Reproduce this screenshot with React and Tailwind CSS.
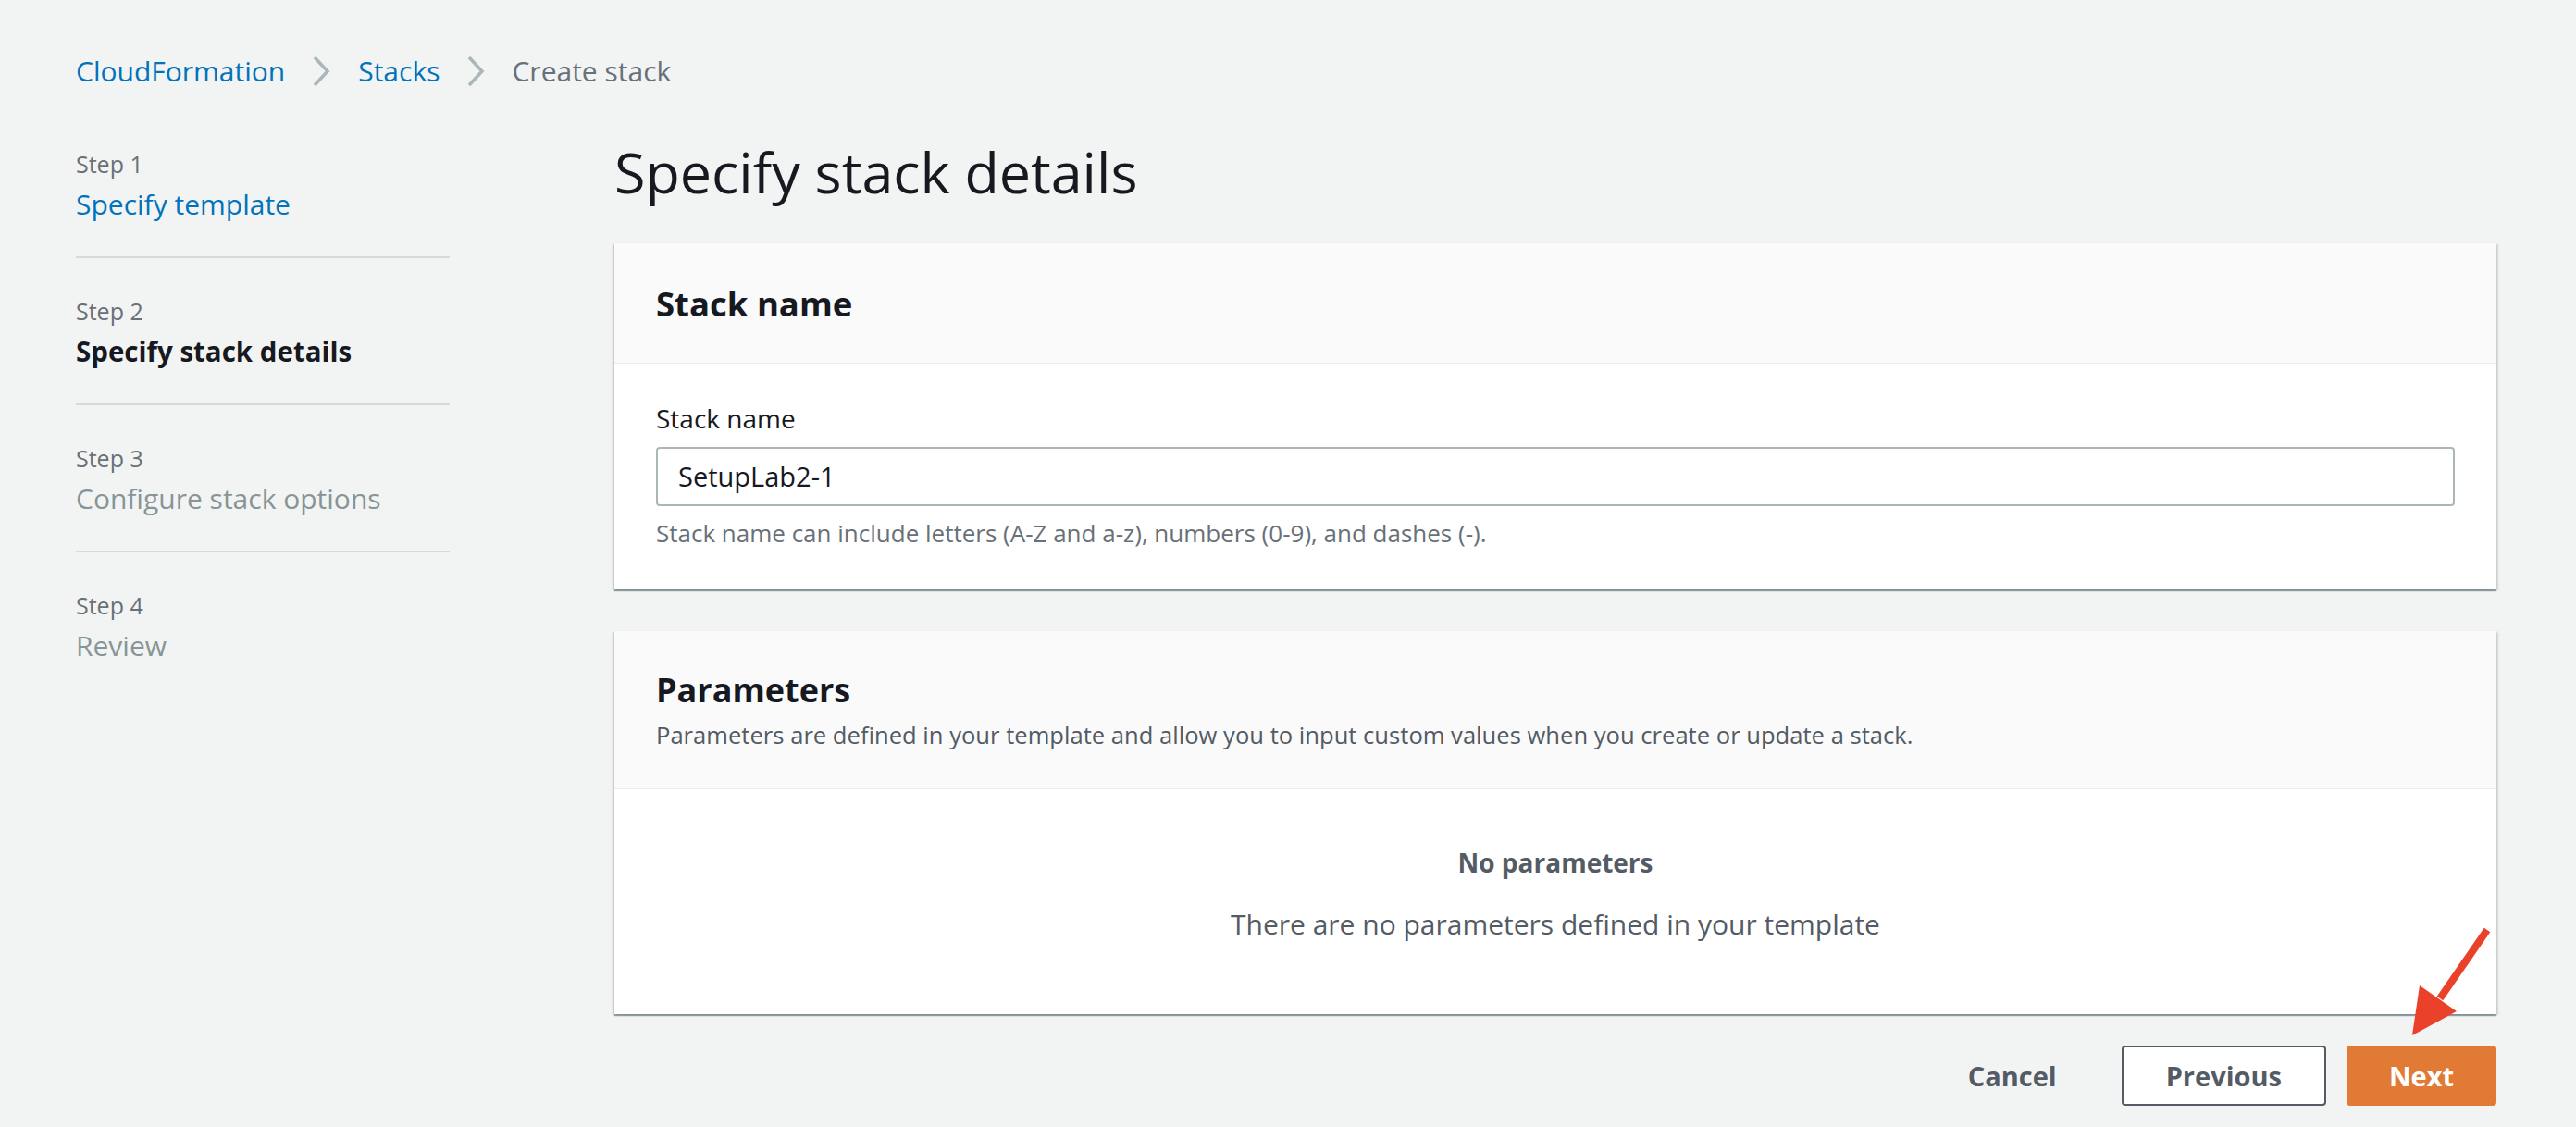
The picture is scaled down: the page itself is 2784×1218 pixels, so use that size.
import React from "react";

function Chevron() {
  return (
    <svg width="20" height="34" viewBox="0 0 20 34" className="shrink-0">
      <path d="M3 2 L17 17 L3 32" fill="none" stroke="#aab7b8" strokeWidth="3.5" />
    </svg>
  );
}

function Step({ n, title, state, first, last }) {
  const titleCls =
    state === "link"
      ? "text-[#0073bb] text-[30px]"
      : state === "active"
      ? "text-[#16191f] font-bold text-[29.5px]"
      : "text-[#879596] text-[30px]";
  return (
    <div className={`${first ? "pt-[10px]" : "pt-[40px]"} ${last ? "" : "pb-[36px] border-b-2 border-[#d5dbdb]"}`}>
      <div className="text-[25px] leading-[34px] text-[#687078]">Step {n}</div>
      <div className={`mt-[7px] leading-[40px] ${titleCls}`}>{title}</div>
    </div>
  );
}

const cardShadow =
  "shadow-[0_2px_1px_0_rgba(0,28,36,0.35),2px_1px_2px_0_rgba(0,28,36,0.12),-2px_1px_2px_0_rgba(0,28,36,0.12)]";

export default function App() {
  return (
    <div className="relative min-h-[1218px] w-[2784px] bg-[#f2f3f3] pl-[82px] pr-[86px] pt-[57px] font-['Open_Sans',sans-serif]">
      {/* Breadcrumb */}
      <nav className="flex h-[40px] items-center text-[30px] leading-[40px]">
        <span className="text-[#0073bb]">CloudFormation</span>
        <span className="ml-[29px] mr-[30px] flex items-center">
          <Chevron />
        </span>
        <span className="text-[#0073bb]">Stacks</span>
        <span className="ml-[29px] mr-[29px] flex items-center">
          <Chevron />
        </span>
        <span className="text-[#687078]">Create stack</span>
      </nav>

      <div className="mt-[53px] flex">
        {/* Left steps */}
        <aside className="w-[404px] shrink-0">
          <Step n={1} title="Specify template" state="link" first />
          <Step n={2} title="Specify stack details" state="active" />
          <Step n={3} title="Configure stack options" state="disabled" />
          <Step n={4} title="Review" state="disabled" last />
        </aside>

        {/* Main */}
        <main className="ml-[178px] flex-1">
          <h1 className="text-[61px] font-normal leading-[72px] text-[#16191f]">Specify stack details</h1>

          <section className={`mt-[41px] bg-white ${cardShadow}`}>
            <div className="flex h-[130px] items-center border-b border-[#eaeded] bg-[#fafafa] px-[45px]">
              <h2 className="text-[36.5px] font-bold leading-[44px] text-[#16191f]">Stack name</h2>
            </div>
            <div className="px-[45px] pb-[45px] pt-[41px]">
              <div className="text-[28px] leading-[36px] text-[#16191f]">Stack name</div>
              <div className="mt-[13px] flex h-[64px] items-center rounded-[4px] border-2 border-[#aab7b8] bg-white px-[22px] text-[29px] text-[#16191f]">
                SetupLab2-1
              </div>
              <div className="mt-[13px] text-[26px] leading-[32px] text-[#687078]">
                Stack name can include letters (A-Z and a-z), numbers (0-9), and dashes (-).
              </div>
            </div>
          </section>

          <section className={`mt-[45px] bg-white ${cardShadow}`}>
            <div className="border-b border-[#eaeded] bg-[#fafafa] px-[45px] pb-[41px] pt-[42px]">
              <h2 className="text-[36px] font-bold leading-[44px] text-[#16191f]">Parameters</h2>
              <div className="mt-[11px] text-[25.6px] leading-[32px] text-[#545b64]">
                Parameters are defined in your template and allow you to input custom values when you create or update a stack.
              </div>
            </div>
            <div className="flex flex-col items-center pb-[77px] pt-[61px]">
              <div className="text-[28px] font-bold leading-[36px] text-[#545b64]">No parameters</div>
              <div className="mt-[29px] text-[30px] leading-[40px] text-[#545b64]">
                There are no parameters defined in your template
              </div>
            </div>
          </section>

          <div className="mt-[34px] flex items-center justify-end gap-[22px]">
            <button className="flex h-[65px] items-center border-2 border-transparent px-[46px] text-[29px] font-bold text-[#545b64]">
              Cancel
            </button>
            <button className="flex h-[65px] items-center rounded-[4px] border-2 border-[#545b64] bg-white px-[46px] text-[29px] font-bold text-[#545b64]">
              Previous
            </button>
            <button className="flex h-[65px] items-center rounded-[4px] border-2 border-[#e07a34] bg-[#e07a34] px-[44px] text-[29px] font-bold text-white">
              Next
            </button>
          </div>
        </main>
      </div>

      {/* Red annotation arrow */}
      <svg
        className="pointer-events-none absolute left-[2590px] top-[995px]"
        width="110"
        height="135"
        viewBox="0 0 110 135"
      >
        <line x1="98" y1="10" x2="47" y2="84" stroke="#e9412a" strokeWidth="8" />
        <polygon points="17,124 25,70 65,98" fill="#e9412a" />
      </svg>
    </div>
  );
}
